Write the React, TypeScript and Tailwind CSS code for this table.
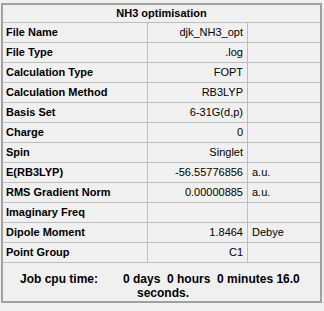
const rows: { label: string; value: string; unit?: string }[] = [
  { label: 'File Name', value: 'djk_NH3_opt' },
  { label: 'File Type', value: '.log' },
  { label: 'Calculation Type', value: 'FOPT' },
  { label: 'Calculation Method', value: 'RB3LYP' },
  { label: 'Basis Set', value: '6-31G(d,p)' },
  { label: 'Charge', value: '0' },
  { label: 'Spin', value: 'Singlet' },
  { label: 'E(RB3LYP)', value: '-56.55776856', unit: 'a.u.' },
  { label: 'RMS Gradient Norm', value: '0.00000885', unit: 'a.u.' },
  { label: 'Imaginary Freq', value: '' },
  { label: 'Dipole Moment', value: '1.8464', unit: 'Debye' },
  { label: 'Point Group', value: 'C1' },
]

export default function App() {
  return (
    <div
      className="w-[324px] h-[311px] bg-[#f0f0f0] pl-[1px] pt-[3px] text-[11px] text-black leading-none"
      style={{ fontFamily: '"Liberation Sans", Arial, sans-serif' }}
    >
      <div className="w-[321px] border-2 border-[#a0a0a0] bg-[#f0f0f0]">
        {/* title */}
        <div className="h-[18px] border-b border-[#bebebe] flex items-center justify-center font-bold">
          NH3 optimisation
        </div>

        {/* property rows */}
        {rows.map((r) => (
          <div key={r.label} className="h-[20px] border-b border-[#bebebe] grid grid-cols-[145px_100px_1fr]">
            <div className="border-r border-[#bebebe] flex items-center pl-[3px] font-bold">{r.label}</div>
            <div className="border-r border-[#bebebe] flex items-center justify-end pr-[4px]">{r.value}</div>
            <div className="flex items-center pl-[4px]">{r.unit ?? ''}</div>
          </div>
        ))}

        {/* cpu time */}
        <div className="h-[38px] flex pt-[10px] font-bold text-[12px]">
          <div className="w-[120px] pl-[17px]">Job cpu time:</div>
          <div className="flex flex-col gap-[2px]">
            <div className="whitespace-pre">0 days  0 hours  0 minutes 16.0</div>
            <div className="pl-[14px]">seconds.</div>
          </div>
        </div>
      </div>
    </div>
  )
}
